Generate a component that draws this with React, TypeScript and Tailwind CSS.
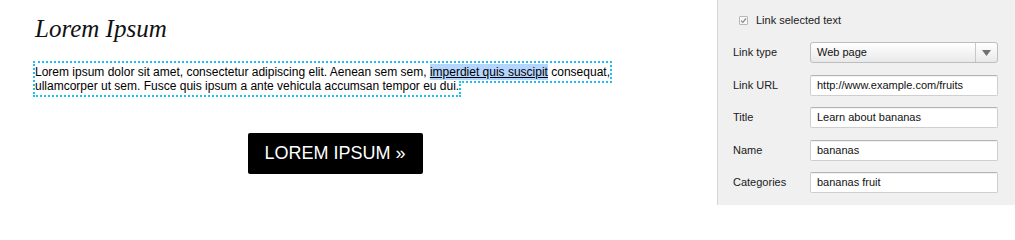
const fields = [
  { label: "Link URL", value: "http://www.example.com/fruits" },
  { label: "Title", value: "Learn about bananas" },
  { label: "Name", value: "bananas" },
  { label: "Categories", value: "bananas fruit" },
  { label: "", value: "" },
];

function Label({ children }: { children: React.ReactNode }) {
  return <span className="w-[77px] shrink-0 text-[11px] text-[#1a1a1a]">{children}</span>;
}

export default function App() {
  return (
    <div className="flex h-[205px] w-[1015px] overflow-hidden bg-white font-['Liberation_Sans',Arial,sans-serif]">
      {/* editor */}
      <div className="flex-1 pl-[35px]">
        <h1 className="mt-[14px] font-['Liberation_Serif',serif] text-[25px] italic leading-[30px] text-[#111]">
          Lorem Ipsum
        </h1>
        <p className="mt-[21px] w-[600px] text-[12px] leading-[14px] text-black">
          <span className="py-[2px] outline-2 outline-dotted outline-[#1ec0f0]">
            Lorem ipsum dolor sit amet, consectetur adipiscing elit. Aenean sem sem,{" "}
            <span className="bg-[#b4d5fe] py-[1px] underline">imperdiet quis suscipit</span> consequat,
            ullamcorper ut sem. Fusce quis ipsum a ante vehicula accumsan tempor eu dui.
          </span>
        </p>
        <div className="mt-[40px] flex w-[600px] justify-center">
          <button className="h-[41px] w-[175px] rounded-[2px] bg-black text-[18px] text-white">
            LOREM IPSUM »
          </button>
        </div>
      </div>

      {/* link panel */}
      <div className="w-[298px] shrink-0 border-l border-[#d6d6d6] bg-[#f0f0f0] pl-[15px] pr-[17px]">
        <div className="mt-[13px] flex h-[14px] items-center gap-[8px] pl-[6px]">
          <span className="flex h-[9px] w-[9px] items-center justify-center rounded-[1px] border border-[#b8b8b8] bg-[#f7f7f7]">
            <svg width="7" height="7" viewBox="0 0 7 7">
              <path d="M1 3.6 L2.8 5.3 L6 1.5" fill="none" stroke="#8a8a8a" strokeWidth="1.2" />
            </svg>
          </span>
          <span className="text-[11px] text-[#1a1a1a]">Link selected text</span>
        </div>

        <div className="mt-[15px] flex flex-col gap-[11.5px]">
          <div className="flex items-center">
            <Label>Link type</Label>
            <div className="flex h-[21px] flex-1 items-center rounded-[3px] border border-[#bdbdbd] bg-gradient-to-b from-white to-[#e9e9e9]">
              <span className="flex-1 pl-[6px] text-[11px] text-[#111]">Web page</span>
              <span className="flex h-full w-[22px] items-center justify-center border-l border-[#c8c8c8]">
                <svg width="9" height="6" viewBox="0 0 9 6">
                  <path d="M0 0 H9 L4.5 6 Z" fill="#707070" />
                </svg>
              </span>
            </div>
          </div>
          {fields.map((f, i) => (
            <div key={i} className="flex items-center">
              <Label>{f.label}</Label>
              <div className="flex h-[21px] flex-1 items-center rounded-[2px] border border-[#cfcfcf] border-t-[#b3b3b3] bg-white pl-[6px] text-[11px] text-[#111] shadow-[inset_0_1px_1px_rgba(0,0,0,0.06)]">
                {f.value}
              </div>
            </div>
          ))}
        </div>
      </div>
    </div>
  );
}
